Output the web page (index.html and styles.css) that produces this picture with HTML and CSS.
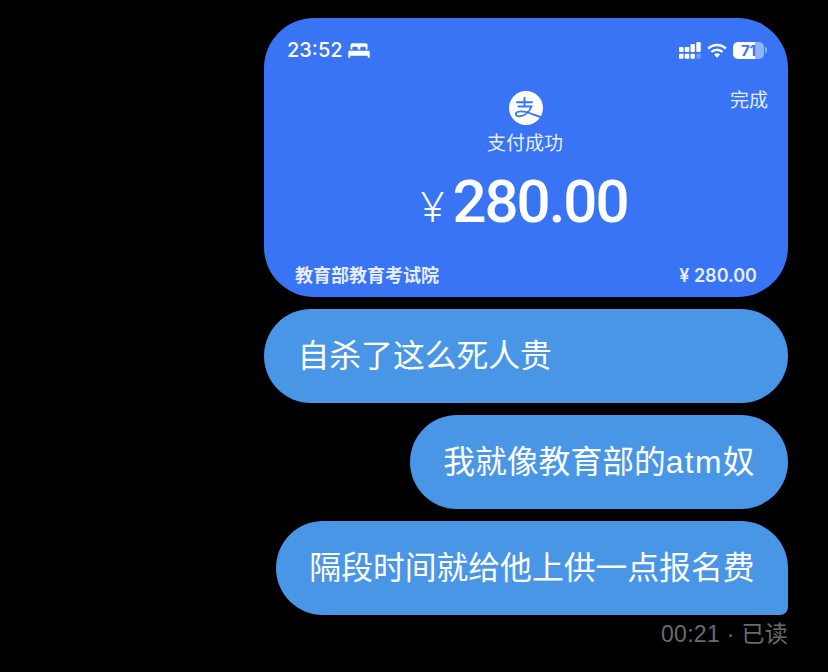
FILE: index.html
```html
<!DOCTYPE html>
<html lang="zh-CN">
<head>
  <meta charset="UTF-8" />
  <title>聊天</title>
  <link rel="stylesheet" href="styles.css">
</head>
<body>
  <div class="chat">
    <!-- payment screenshot -->
    <div class="shot">
      <div class="status">
        <div class="status-left">
          <span>23:52</span>
          <svg class="bed" width="22" height="15" viewBox="0 0 22 15">
            <path fill="#fff" d="M2.500 2C2.500 1 3.300.3 4.300.3h13.400c1 0 1.800.7 1.800 1.700v4.500h-1.800V5c0-.7-.5-1.200-1.200-1.200h-3c-.7 0-1.200.5-1.200 1.200v1.500H9.700V5c0-.7-.5-1.200-1.200-1.200h-3C4.800 3.800 4.300 4.300 4.300 5v1.500H2.500zM1.500 7.800h19c.7 0 1.200.5 1.200 1.200v5.700h-1.900v-1.900H2.200v1.900H.3V9c0-.7.5-1.200 1.200-1.200z"/>
          </svg>
        </div>
        <div class="status-right">
          <svg width="22" height="17" viewBox="0 0 22 17">
            <g fill="#fff">
              <rect x="0" y="5" width="4.600" height="5" rx="1"/><rect x="0" y="11.700" width="4.600" height="5" rx="1"/>
              <rect x="5.700" y="5" width="4.600" height="5" rx="1"/><rect x="5.700" y="11.700" width="4.600" height="5" rx="1"/>
              <rect x="11.500" y="2" width="4.400" height="8" rx="1"/><rect x="11.500" y="11.700" width="4.400" height="5" rx="1"/>
              <rect x="17.300" y="0" width="4.400" height="10" rx="1"/>
            </g>
            <rect x="17.300" y="11.700" width="4.400" height="5" rx="1" fill="#6f9bf5"/>
          </svg>
          <svg width="20" height="15" viewBox="0 0 20 15">
            <path fill="none" stroke="#fff" stroke-width="2.400" d="M1.200 5.600a12.500 12.500 0 0 1 17.600 0M4.400 9a8 8 0 0 1 11.200 0"/>
            <path fill="#fff" d="M10 14.800l-3-3.200a4.200 4.200 0 0 1 6 0z"/>
          </svg>
          <div class="battery"><span class="battery-num">71</span></div>
          <div class="battery-cap"></div>
        </div>
      </div>
      <div class="done">完成</div>
      <div class="center">
        <svg class="logo" width="34" height="34" viewBox="0 0 34 34">
          <circle cx="17" cy="17" r="17" fill="#fff"/>
          <path fill="none" stroke="#3874f4" stroke-width="1.900" stroke-linecap="round" d="M8 11.300h15M15.500 6.800v8.200M9.500 15.500h13c-1.800 5-6.500 9-11.500 9.800-4 .6-5.500-3-2.500-4.300 4-1.700 12 .5 15.500 2.500l9 3"/>
        </svg>
        <div class="pay-ok">支付成功</div>
        <div class="amount"><span class="yen">¥</span><span class="num">280.00</span></div>
      </div>
      <div class="foot">
        <span class="payee">教育部教育考试院</span>
        <span class="paid">¥ 280.00</span>
      </div>
    </div>

    <div class="bubble wide">自杀了这么死人贵</div>
    <div class="bubble">我就像教育部的<span class="latin">atm</span>奴</div>
    <div class="bubble last">隔段时间就给他上供一点报名费</div>
    <div class="read">00:21 · 已读</div>
  </div>
</body>
</html>
```

FILE: styles.css
```css
body {
  margin: 0;
  background: #000;
  font-family: "Liberation Sans", "Noto Sans CJK SC", sans-serif;
  height: 672px;
  overflow: hidden;
}
.chat {
  display: flex;
  flex-direction: column;
  align-items: flex-end;
  padding: 18px 40px 0 0;
}
.shot {
  position: relative;
  width: 524px;
  height: 279px;
  background: #3874f4;
  border-radius: 50px;
  color: #fff;
  margin-bottom: 12px;
  display: flex;
  flex-direction: column;
}
.status {
  display: flex;
  justify-content: space-between;
  align-items: center;
  height: 26px;
  padding: 19px 21px 0 23px;
  font-family: "Inter", sans-serif;
  font-size: 20px;
  font-weight: 500;
}
.status-left {
  display: flex;
  align-items: center;
  gap: 5px;
}
.status-right {
  display: flex;
  align-items: center;
  gap: 6px;
}
.battery {
  width: 31px;
  height: 17px;
  border-radius: 5px;
  background: linear-gradient(90deg, #fff 71%, #8fb3fa 71%);
  display: flex;
  align-items: center;
  justify-content: center;
}
.battery-num {
  color: #3874f4;
  font-size: 15px;
  font-weight: 700;
}
.battery-cap {
  width: 2px;
  height: 6px;
  margin-left: -5px;
  background: #8fb3fa;
  border-radius: 0 2px 2px 0;
}
.done {
  position: absolute;
  top: 67px;
  right: 20px;
  font-size: 19px;
  color: #e6eefe;
}
.center {
  display: flex;
  flex-direction: column;
  align-items: center;
  margin-top: 28px;
}
.pay-ok {
  font-size: 19px;
  line-height: 24px;
  margin: 7px 2px 0 0;
  color: #e6eefe;
}
.amount {
  display: flex;
  align-items: baseline;
  margin: 12px 4px 0 0;
  line-height: 68px;
}
.yen {
  font-size: 42px;
  margin-right: 8px;
  font-family: "Noto Sans", sans-serif;
  font-weight: 300;
}
.num {
  font-family: "Roboto", sans-serif;
  font-size: 60px;
  font-weight: 500;
  letter-spacing: -2px;
}
.foot {
  display: flex;
  justify-content: space-between;
  margin-top: auto;
  padding: 0 31px 9px 31px;
  font-weight: bold;
  color: #e6eefe;
  line-height: 24px;
}
.payee {
  font-size: 18px;
}
.paid {
  font-family: "Inter", sans-serif;
  font-size: 18px;
  font-weight: 600;
}
.bubble {
  box-sizing: border-box;
  height: 94px;
  padding: 0 33.500px;
  background: #4a96e6;
  border-radius: 47px;
  color: #fff;
  font-size: 31.800px;
  line-height: 95px;
  margin-bottom: 12px;
}
.bubble.wide {
  width: 524px;
}
.bubble.last {
  border-bottom-right-radius: 8px;
  margin-bottom: 5px;
}
.latin {
  letter-spacing: 1.300px;
}
.read {
  font-size: 23px;
  letter-spacing: .3px;
  line-height: 28px;
  color: #6b6b6b;
}
```
